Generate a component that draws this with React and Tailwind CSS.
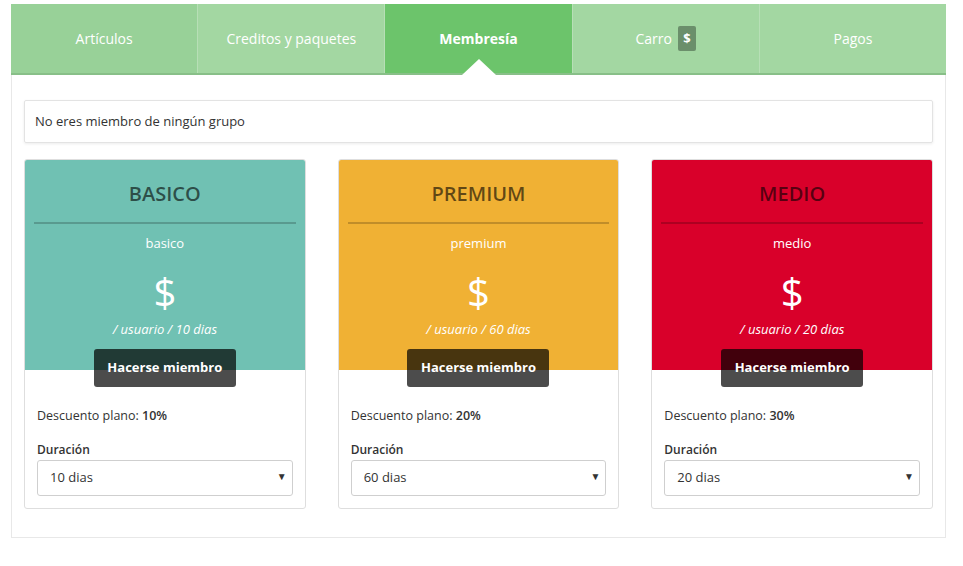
import { useState } from "react";

const tabs = [
  { label: "Artículos", bg: "bg-[#98d198]" },
  { label: "Creditos y paquetes", bg: "bg-[#a3d7a2]" },
  { label: "Membresía", active: true },
  { label: "Carro", badge: "$", bg: "bg-[#a3d7a2]" },
  { label: "Pagos", bg: "bg-[#a3d7a2]" },
];

const plans = [
  { name: "BASICO", slug: "basico", days: 10, discount: "10%", bg: "bg-[#70c1b3]" },
  { name: "PREMIUM", slug: "premium", days: 60, discount: "20%", bg: "bg-[#f0b134]" },
  { name: "MEDIO", slug: "medio", days: 20, discount: "30%", bg: "bg-[#d9002a]" },
];

const PlanCard = ({ plan }) => {
  const [days, setDays] = useState(plan.days);

  return (
    <div className="rounded-[3px] border border-[#dedede] overflow-hidden bg-white">
      <div className={`${plan.bg} pt-[20px] pb-[31px] text-center`}>
        <h3 className="text-[20px] leading-[28px] font-semibold text-black/60">{plan.name}</h3>
        <div className="mx-[9px] mt-[14px] h-[2px] bg-black/20" />
        <p className="mt-[9px] text-[13px] leading-[20px] text-white">{plan.slug}</p>
        <p className="mt-[15px] text-[40px] leading-[48px] text-white">$</p>
        <p className="mt-[3px] text-[13px] leading-[20px] italic text-white">
          / usuario / {plan.days} dias
        </p>
      </div>
      <div className="px-[12px] pb-[12px]">
        <div className="flex justify-center -mt-[21px]">
          <button className="h-[38px] w-[142px] rounded-[3px] bg-black/70 text-[13px] font-bold text-white">
            Hacerse miembro
          </button>
        </div>
        <p className="mt-[19px] text-[12.5px] leading-[20px] text-[#333]">
          Descuento plano: <span className="font-semibold">{plan.discount}</span>
        </p>
        <label className="mt-[15px] block text-[12px] leading-[18px] font-semibold text-[#333]">
          Duración
        </label>
        <div className="relative mt-[1px]">
          <select
            value={days}
            onChange={(e) => setDays(e.target.value)}
            className="h-[36px] w-full appearance-none rounded-[3px] border border-[#cfcfcf] bg-white pl-[12px] text-[13px] text-[#333] outline-none"
          >
            <option value={plan.days}>{plan.days} dias</option>
          </select>
          <span className="pointer-events-none absolute right-[6px] top-[9px] text-[10px] text-[#333]">▼</span>
        </div>
      </div>
    </div>
  );
};

export default function App() {
  return (
    <div className="min-h-[566px] bg-white pt-[4px] font-['Open_Sans',sans-serif]">
      <div className="ml-[11px] w-[935px]">
        <nav className="flex border-b-2 border-[#88bf88]">
          {tabs.map((tab, i) => (
            <div
              key={tab.label}
              className={`relative flex h-[69px] flex-1 items-center justify-center gap-[6px] text-[14px] text-white ${
                tab.active ? "bg-[#6cc46b] font-bold" : tab.bg
              } ${i > 0 ? "border-l border-[#b7dfb6]" : ""}`}
            >
              {tab.label}
              {tab.badge && (
                <span className="flex h-[25px] w-[18px] items-center justify-center rounded-[2px] bg-[#6b8f6b] text-[13px] font-bold">
                  {tab.badge}
                </span>
              )}
              {tab.active && (
                <span className="absolute bottom-[-2px] left-1/2 -translate-x-1/2 border-x-[17px] border-b-[16px] border-x-transparent border-b-white" />
              )}
            </div>
          ))}
        </nav>

        <div className="border-x border-b border-[#e8e8e8] px-[12px] pt-[25px] pb-[28px]">
          <div className="flex h-[43px] items-center rounded-[2px] border border-[#e3e3e3] px-[10px] text-[13px] text-[#333] shadow-[0_1px_3px_rgba(0,0,0,0.08)]">
            No eres miembro de ningún grupo
          </div>
          <div className="mt-[16px] grid grid-cols-3 gap-[32px]">
            {plans.map((plan) => (
              <PlanCard key={plan.name} plan={plan} />
            ))}
          </div>
        </div>
      </div>
    </div>
  );
}
